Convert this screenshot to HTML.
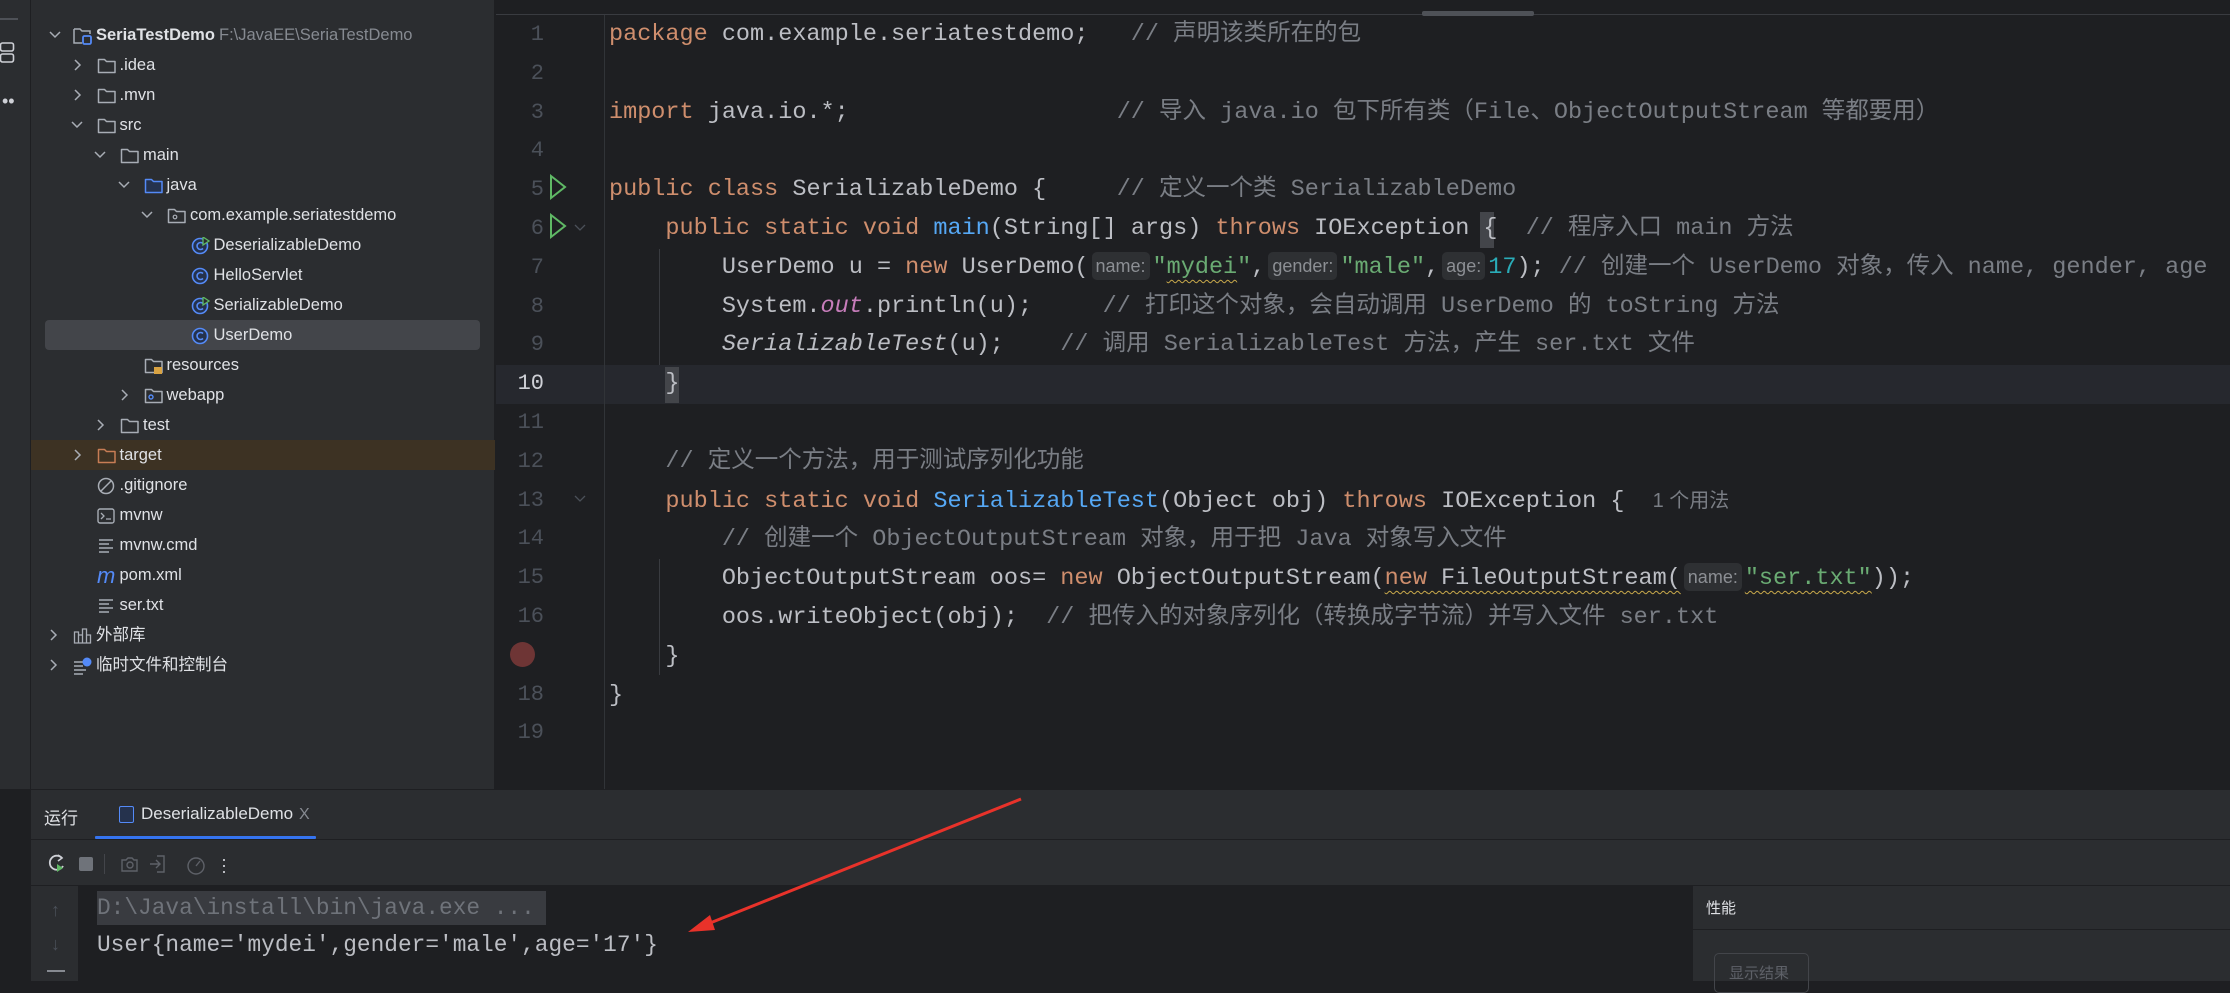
<!DOCTYPE html>
<html><head><meta charset="utf-8"><style>
*{margin:0;padding:0;box-sizing:border-box}
body{width:2230px;height:980px;overflow:hidden;background:#1E1F22;position:relative;font-family:"Liberation Sans","Noto Sans CJK SC",sans-serif;color:#DFE1E5}
.abs{position:absolute}
#strip{left:0;top:0;width:31px;height:789px;background:#2B2D30;border-right:1px solid #1E1F22}
#proj{left:31px;top:0;width:464px;height:789px;background:#2B2D30;border-right:1px solid #1E1F22}
.row{position:absolute;left:0;width:464px;height:30px;font-size:16.5px;line-height:30px;white-space:nowrap}
.row .t{position:absolute;top:0}
.row svg{position:absolute;top:7px}
#ed{left:496px;top:0;width:1734px;height:789px;background:#1E1F22;overflow:hidden}
.code{position:absolute;left:113px;top:16px;font-family:"Liberation Mono","Noto Sans CJK SC",monospace;font-size:23.5px;line-height:38.8px;white-space:pre;color:#BCBEC4}
.ln{position:absolute;left:0;width:48px;text-align:right;top:16px;font-family:"Liberation Mono",monospace;font-size:22px;line-height:38.8px;color:#4B5059;white-space:pre}
.k{color:#CF8E6D}.c{color:#7A7E85}.s{color:#6AAB73}.f{color:#56A8F5}.n{color:#2AACB8}.o{color:#C77DBB;font-style:italic}.i{font-style:italic}
.h{display:inline-block;background:#2E3033;color:#8C8F94;font-family:"Liberation Sans",sans-serif;font-size:18px;line-height:28px;border-radius:5px;padding:0 4px;margin:0 3px;vertical-align:1px}
.w{text-decoration:underline wavy #C9A94B;text-underline-offset:6px;text-decoration-thickness:1px}
#bot{left:31px;top:789px;width:2199px;height:191px;background:#2B2D30;border-top:1px solid #1E1F22}
</style></head><body>
<div id="strip" class="abs">
<div class="abs" style="left:0;top:18px;width:18px;height:2px;background:#4E5157"></div>
<svg class="abs" style="left:0;top:40px" width="16" height="26"><rect x="0.5" y="3" width="13" height="8" rx="2" fill="none" stroke="#CED0D6" stroke-width="1.6"/><rect x="0.5" y="14" width="13" height="8" rx="2" fill="none" stroke="#CED0D6" stroke-width="1.6"/></svg>
<div class="abs" style="left:2px;top:96px;color:#CED0D6;font-size:18px;line-height:10px">••</div>
</div>
<div id="proj" class="abs">
<div class="row" style="top:20px"><svg style="left:17px;top:10px" width="14" height="10"><path d="M2 2l5 5 5-5" fill="none" stroke="#A8ADB5" stroke-width="1.5"/></svg><svg style="left:42px" width="20" height="18"><path d="M1 2h6l2 2h8v3M1 2v14h8" fill="none" stroke="#A8ADB5" stroke-width="1.5"/><rect x="10" y="9" width="8" height="8" rx="1.5" fill="none" stroke="#548AF7" stroke-width="1.8"/></svg><span class="t" style="left:65px;font-weight:bold;color:#DFE1E5">SeriaTestDemo</span><span class="t" style="left:188px;color:#868A91">F:\JavaEE\SeriaTestDemo</span></div>
<div id="rows"></div>
</div>
<div id="ed" class="abs">
<div class="abs" style="left:0;top:0;width:1734px;height:15px;background:#1E1F22;border-bottom:1px solid #393B40"></div>
<div class="abs" style="left:926px;top:11px;width:112px;height:5px;background:#4E5157;border-radius:2px"></div>
<div class="abs" style="left:0;top:365px;width:1734px;height:39px;background:#26282E"></div>
<div class="abs" style="left:108px;top:15px;width:1px;height:774px;background:#313438"></div>
<div class="abs" style="left:163px;top:249px;width:1px;height:116px;background:#393B40"></div>
<div class="abs" style="left:163px;top:559px;width:1px;height:116px;background:#393B40"></div>
<div class="abs" style="left:169px;top:367px;width:14px;height:36px;background:#43454A"></div>
<div class="abs" style="left:984px;top:212px;width:14px;height:36px;background:#43454A"></div>
<div class="ln">1
2
3
4
5
6
7
8
9
<span style="color:#CED0D6">10</span>
11
12
13
14
15
16
 
18
19</div>
<svg class="abs" style="left:52px;top:174px" width="20" height="26"><path d="M3 2l14 11-14 11z" fill="none" stroke="#5FB865" stroke-width="2"/></svg>
<svg class="abs" style="left:52px;top:213px" width="20" height="26"><path d="M3 2l14 11-14 11z" fill="none" stroke="#5FB865" stroke-width="2"/></svg>
<svg class="abs" style="left:78px;top:224px" width="12" height="8"><path d="M1 1l5 5 5-5" fill="none" stroke="#4B5059" stroke-width="1.3"/></svg>
<svg class="abs" style="left:78px;top:495px" width="12" height="8"><path d="M1 1l5 5 5-5" fill="none" stroke="#4B5059" stroke-width="1.3"/></svg>
<div class="abs" style="left:14px;top:642px;width:25px;height:25px;border-radius:50%;background:#6E3535"></div>
<div class="code"><span class="k">package</span> com.example.seriatestdemo;   <span class="c">// 声明该类所在的包</span>

<span class="k">import</span> java.io.*;                   <span class="c">// 导入 java.io 包下所有类（File、ObjectOutputStream 等都要用）</span>

<span class="k">public class</span> SerializableDemo {     <span class="c">// 定义一个类 SerializableDemo</span>
    <span class="k">public static void</span> <span class="f">main</span>(String[] args) <span class="k">throws</span> IOException {  <span class="c">// 程序入口 main 方法</span>
        UserDemo u = <span class="k">new</span> UserDemo(<span class="h">name:</span><span class="s">"<span class="w">mydei</span>"</span>,<span class="h">gender:</span><span class="s">"male"</span>,<span class="h">age:</span><span class="n">17</span>); <span class="c">// 创建一个 UserDemo 对象，传入 name, gender, age</span>
        System.<span class="o">out</span>.println(u);     <span class="c">// 打印这个对象，会自动调用 UserDemo 的 toString 方法</span>
        <span class="i">SerializableTest</span>(u);    <span class="c">// 调用 SerializableTest 方法，产生 ser.txt 文件</span>
    }

    <span class="c">// 定义一个方法，用于测试序列化功能</span>
    <span class="k">public static void</span> <span class="f">SerializableTest</span>(Object obj) <span class="k">throws</span> IOException {  <span class="c" style="font-family:'Liberation Sans','Noto Sans CJK SC',sans-serif;font-size:20px">1 个用法</span>
        <span class="c">// 创建一个 ObjectOutputStream 对象，用于把 Java 对象写入文件</span>
        ObjectOutputStream oos= <span class="k">new</span> ObjectOutputStream(<span class="w"><span class="k">new</span> FileOutputStream(</span><span class="h">name:</span><span class="s w">"ser.txt"</span>));
        oos.writeObject(obj);  <span class="c">// 把传入的对象序列化（转换成字节流）并写入文件 ser.txt</span>
    }
}
</div>
</div>
<div id="bot" class="abs">
<div class="abs" style="left:0;top:49px;width:2199px;height:1px;background:#1E1F22"></div>
<div class="abs" style="left:0;top:95px;width:2199px;height:1px;background:#1E1F22"></div>
<div class="abs" style="left:13px;top:14px;font-size:17px;color:#DFE1E5">运行</div>
<div class="abs" style="left:88px;top:16px;width:15px;height:17px;border:1.5px solid #548AF7;border-radius:2px;background:#25324D"></div>
<div class="abs" style="left:110px;top:14px;font-size:17px;color:#DFE1E5">DeserializableDemo</div>
<div class="abs" style="left:268px;top:16px;font-size:16px;color:#868A91">X</div>
<div class="abs" style="left:64px;top:46px;width:221px;height:3px;background:#3574F0;border-radius:1px"></div>
<svg class="abs" style="left:15px;top:62px" width="160" height="24"><path d="M16 6a7 7 0 1 0 1 8" fill="none" stroke="#CED0D6" stroke-width="1.8"/><path d="M12 3l4 3-4 3" fill="none" stroke="#CED0D6" stroke-width="1.6"/><path d="M11 12l6 4-6 4z" fill="#5FB865"/><rect x="33" y="5" width="14" height="14" rx="2" fill="#6F737A"/><rect x="58" y="2" width="1" height="20" fill="#43454A"/><path d="M76 8h4l2-2h4l2 2h3v11h-15z" fill="none" stroke="#5E6168" stroke-width="1.4"/><circle cx="84" cy="13" r="3" fill="none" stroke="#5E6168" stroke-width="1.4"/><path d="M111 4h7v16h-7M104 12h10M110 8l4 4-4 4" fill="none" stroke="#5E6168" stroke-width="1.4"/><circle cx="150" cy="14" r="8" fill="none" stroke="#5E6168" stroke-width="1.4"/><path d="M150 14l4-5" stroke="#5E6168" stroke-width="1.4"/></svg>
<div class="abs" style="left:190px;top:66px;color:#CED0D6;font-size:18px;line-height:6px">·<br>·<br>·</div>
<div class="abs" style="left:0;top:96px;width:47px;height:95px;background:#2B2D30"></div>
<div class="abs" style="left:47px;top:96px;width:1614px;height:95px;background:#1E1F22"></div>
<div class="abs" style="left:20px;top:110px;color:#4B5059;font-size:18px">↑</div>
<div class="abs" style="left:20px;top:144px;color:#4B5059;font-size:18px">↓</div>
<div class="abs" style="left:16px;top:180px;width:18px;height:2px;background:#868A91"></div>
<div class="abs" style="left:66px;top:101px;width:449px;height:34px;background:#393B40"></div>
<div class="abs" style="left:66px;top:101px;font-family:'Liberation Mono',monospace;font-size:22.8px;line-height:34px;color:#6F737A;white-space:pre">D:\Java\install\bin\java.exe ...</div>
<div class="abs" style="left:66px;top:137px;font-family:'Liberation Mono',monospace;font-size:22.8px;line-height:36px;color:#BCBEC4;white-space:pre">User{name='mydei',gender='male',age='17'}</div>
<div class="abs" style="left:1661px;top:96px;width:538px;height:95px;background:#2B2D30;border-left:1px solid #1E1F22"></div>
<div class="abs" style="left:1661px;top:139px;width:538px;height:1px;background:#1E1F22"></div>
<div class="abs" style="left:1675px;top:107px;font-size:15px;color:#DFE1E5">性能</div>
<div class="abs" style="left:1683px;top:163px;width:95px;height:40px;border:1.5px solid #43454A;border-radius:5px;font-size:15px;color:#5E6168;padding:8px 0 0 14px">显示结果</div>
</div>
<svg class="abs" style="left:0;top:0" width="2230" height="980"><line x1="1021" y1="799" x2="700" y2="927" stroke="#E8322A" stroke-width="3"/><path d="M688 932l22-17 5 15z" fill="#E8322A"/></svg>
<script>
var items=[[1,'r','f','.idea'],[1,'r','f','.mvn'],[1,'d','f','src'],[2,'d','f','main'],[3,'d','fb','java'],[4,'d','p','com.example.seriatestdemo'],[5,'','cr','DeserializableDemo'],[5,'','c','HelloServlet'],[5,'','cr','SerializableDemo'],[5,'','c','UserDemo'],[3,'','res','resources'],[3,'r','web','webapp'],[2,'r','f','test'],[1,'r','fo','target'],[1,'','gi','.gitignore'],[1,'','term','mvnw'],[1,'','txt','mvnw.cmd'],[1,'','m','pom.xml'],[1,'','txt','ser.txt'],[0,'r','lib','外部库'],[0,'r','scr','临时文件和控制台']];
var h='';
function folder(col,extra){return '<path d="M1.5 2.5h6l2 2h8.5v11h-16.5z" fill="'+(col=='#548AF7'?'#25324D':'none')+'" stroke="'+col+'" stroke-width="1.5" stroke-linejoin="round"/>'+(extra||'');}
items.forEach(function(it,idx){var d=it[0],top=50+idx*30,ic=42+d*23.5;
var bg='';
if(idx==9)bg='<div style="position:absolute;left:14px;top:0;width:435px;height:30px;background:#43454A;border-radius:4px"></div>';
if(idx==13)bg='<div style="position:absolute;left:0;top:0;width:464px;height:30px;background:#3D3223"></div>';
var ch='';
if(it[1]=='r')ch='<svg style="left:'+(ic-24)+'px;top:8px" width="10" height="14"><path d="M2 2l5 5-5 5" fill="none" stroke="#A8ADB5" stroke-width="1.5"/></svg>';
if(it[1]=='d')ch='<svg style="left:'+(ic-27)+'px;top:10px" width="14" height="10"><path d="M2 2l5 5 5-5" fill="none" stroke="#A8ADB5" stroke-width="1.5"/></svg>';
var s='',t=it[2];
if(t=='f')s=folder('#A8ADB5');else if(t=='fb')s=folder('#548AF7');else if(t=='fo')s=folder('#C77D55');
else if(t=='p')s=folder('#A8ADB5','<circle cx="8" cy="10" r="1.8" fill="none" stroke="#A8ADB5" stroke-width="1.2"/>');
else if(t=='res')s=folder('#A8ADB5','<rect x="10" y="10" width="8" height="7" fill="#D9A343"/>');
else if(t=='web')s=folder('#A8ADB5','<circle cx="7" cy="10" r="2" fill="none" stroke="#548AF7" stroke-width="1.4"/>');
else if(t=='c'||t=='cr')s='<circle cx="9" cy="9" r="7.5" fill="#25324D" stroke="#548AF7" stroke-width="1.6"/><path d="M12 6.5a3.5 3.5 0 1 0 0 5" fill="none" stroke="#548AF7" stroke-width="1.6"/>'+(t=='cr'?'<path d="M12 0l6 4-6 4z" fill="#2B2D30" stroke="#5FB865" stroke-width="1.3"/>':'');
else if(t=='gi')s='<circle cx="9" cy="9" r="7.5" fill="none" stroke="#A8ADB5" stroke-width="1.5"/><path d="M4 14l10-10" stroke="#A8ADB5" stroke-width="1.5"/>';
else if(t=='term')s='<rect x="1" y="2" width="16" height="14" rx="2" fill="none" stroke="#A8ADB5" stroke-width="1.4"/><path d="M4 6l3 3-3 3M9 12h5" fill="none" stroke="#A8ADB5" stroke-width="1.3"/>';
else if(t=='txt')s='<path d="M2 3h14M2 7h10M2 11h14M2 15h10" stroke="#A8ADB5" stroke-width="1.4"/>';
else if(t=='m')s='<text x="0" y="16" font-family="Liberation Sans" font-style="italic" font-size="22" fill="#548AF7">m</text>';
else if(t=='lib')s='<path d="M1.5 5h4v11h-4zM5.5 8h4v8h-4zM9.5 2h4v14h-4zM13.5 8h4v8h-4z" fill="none" stroke="#A8ADB5" stroke-width="1.3"/>';
else if(t=='scr')s='<path d="M1 5h9M1 9h9M1 13h12M1 17h9" stroke="#A8ADB5" stroke-width="1.4"/><circle cx="14" cy="5" r="4.5" fill="#548AF7"/>';
h+='<div class="row" style="top:'+top+'px">'+bg+ch+'<svg style="left:'+ic+'px" width="20" height="19">'+s+'</svg><span class="t" style="left:'+(ic+23)+'px">'+it[3]+'</span></div>';});
document.getElementById('rows').outerHTML=h;
</script>
</body></html>
